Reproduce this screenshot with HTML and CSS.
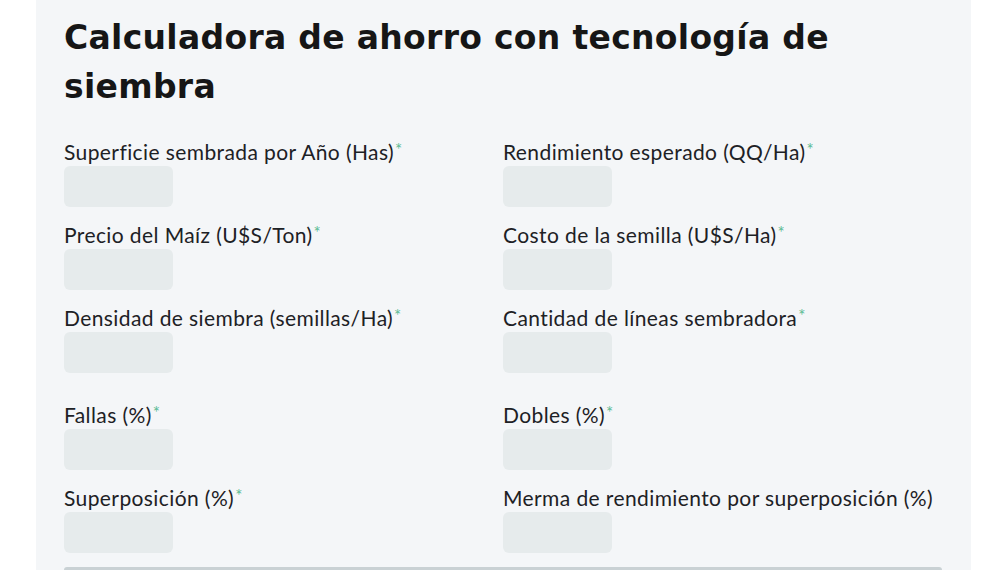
FILE: index.html
```html
<!DOCTYPE html>
<html lang="es">
<head>
<meta charset="utf-8">
<title>Calculadora de ahorro</title>
<link rel="stylesheet" href="styles.css">
</head>
<body>
<div class="page">
  <section class="panel">
    <h1 class="title">Calculadora de ahorro con tecnología de siembra</h1>
    <form class="form">
      <div class="field">
        <label class="label">Superficie sembrada por Año (Has)<span class="req">*</span></label>
        <div class="input"></div>
      </div>
      <div class="field">
        <label class="label">Rendimiento esperado (QQ/Ha)<span class="req">*</span></label>
        <div class="input"></div>
      </div>
      <div class="field">
        <label class="label">Precio del Maíz (U$S/Ton)<span class="req">*</span></label>
        <div class="input"></div>
      </div>
      <div class="field">
        <label class="label">Costo de la semilla (U$S/Ha)<span class="req">*</span></label>
        <div class="input"></div>
      </div>
      <div class="field field--spaced">
        <label class="label">Densidad de siembra (semillas/Ha)<span class="req">*</span></label>
        <div class="input"></div>
      </div>
      <div class="field field--spaced">
        <label class="label">Cantidad de líneas sembradora<span class="req">*</span></label>
        <div class="input"></div>
      </div>
      <div class="field">
        <label class="label">Fallas (%)<span class="req">*</span></label>
        <div class="input"></div>
      </div>
      <div class="field">
        <label class="label">Dobles (%)<span class="req">*</span></label>
        <div class="input"></div>
      </div>
      <div class="field">
        <label class="label">Superposición (%)<span class="req">*</span></label>
        <div class="input"></div>
      </div>
      <div class="field">
        <label class="label">Merma de rendimiento por superposición (%)</label>
        <div class="input"></div>
      </div>
    </form>
    <div class="submit-bar"></div>
  </section>
</div>
</body>
</html>
```
FILE: styles.css
```css
html, body {
  margin: 0;
  padding: 0;
  background: #ffffff;
}
body {
  height: 570px;
  overflow: hidden;
}
.page {
  padding-left: 36px;
}
.panel {
  width: 935px;
  height: 570px;
  overflow: hidden;
  box-sizing: border-box;
  background: #f4f6f8;
  padding: 13px 29px 0 28px;
}
.title {
  margin: 0;
  font-family: "DejaVu Sans", Inter, sans-serif;
  font-weight: 700;
  font-size: 33px;
  line-height: 49px;
  color: #161616;
  letter-spacing: 0.3px;
}
.form {
  margin-top: 30px;
  display: grid;
  grid-template-columns: 439px 439px;
  row-gap: 17px;
}
.field {
  display: flex;
  flex-direction: column;
  align-items: flex-start;
}
.field--spaced {
  margin-bottom: 14px;
}
.label {
  font-family: Lato, "Open Sans", sans-serif;
  font-size: 21px;
  line-height: 22px;
  letter-spacing: 0.4px;
  color: #1d2125;
}
.req {
  color: #5cbb94;
  font-size: 17px;
  vertical-align: top;
  line-height: 18px;
  margin-left: 1px;
}
.input {
  margin-top: 3px;
  width: 109px;
  height: 41px;
  border-radius: 6px;
  background: #e6ebec;
}
.submit-bar {
  margin-top: 14px;
  height: 3px;
  border-radius: 4px 4px 0 0;
  background: #c9d1d4;
}
```
